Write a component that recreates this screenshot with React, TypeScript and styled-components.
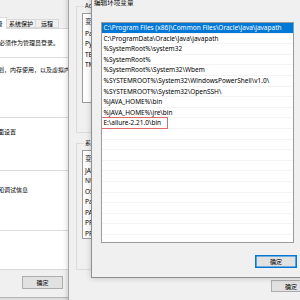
import React from "react";
import styled, { createGlobalStyle } from "styled-components";

const UI = `"Noto Sans", "Noto Sans CJK SC", sans-serif`;
const CJK = `"Noto Sans CJK SC", "Noto Sans", sans-serif`;

const GlobalStyle = createGlobalStyle`
  html, body { margin: 0; padding: 0; background: #f0f0f0; }
  body { font-family: ${UI}; }
  * { box-sizing: border-box; }
`;

const Desktop = styled.div`
  position: relative;
  width: 300px;
  height: 300px;
  overflow: hidden;
  background: #f0f0f0;
  color: #000;
  font-family: ${UI};
  font-size: 6.5px;
`;

const Window = styled.div<{ $x: number; $y: number; $w: number; $h: number; $z: number; $border: string }>`
  position: absolute;
  left: ${(p) => p.$x}px;
  top: ${(p) => p.$y}px;
  width: ${(p) => p.$w}px;
  height: ${(p) => p.$h}px;
  z-index: ${(p) => p.$z};
  display: flex;
  flex-direction: column;
  background: #f0f0f0;
  border: 1px solid ${(p) => p.$border};
  box-shadow: 0 0 6px rgba(0, 0, 0, 0.2);
`;

const TitleBar = styled.div<{ $h: number }>`
  flex: none;
  height: ${(p) => p.$h}px;
  display: flex;
  align-items: center;
  padding-left: 2px;
  font-family: ${CJK};
  font-size: 6.6px;
  color: #000;
  white-space: nowrap;
`;

const Body = styled.div<{ $pad: string }>`
  flex: 1;
  display: flex;
  flex-direction: column;
  padding: ${(p) => p.$pad};
  min-height: 0;
`;

/* ---------- System properties (window 1) ---------- */

const TabStrip = styled.div`
  flex: none;
  height: 12px;
  display: flex;
  align-items: flex-end;
  margin-bottom: -1px;
  position: relative;
  z-index: 1;
`;

const Tab = styled.div<{ $w: number; $active?: boolean }>`
  width: ${(p) => p.$w}px;
  height: ${(p) => (p.$active ? 12 : 9)}px;
  margin-bottom: ${(p) => (p.$active ? 0 : 1)}px;
  margin-left: ${(p) => (p.$active ? 0 : -1)}px;
  display: flex;
  align-items: center;
  justify-content: center;
  font-family: ${CJK};
  font-size: 6px;
  white-space: nowrap;
  background: ${(p) => (p.$active ? "#fff" : "#f0f0f0")};
  border: 1px solid #d9d9d9;
  border-bottom: ${(p) => (p.$active ? "none" : "1px solid #d9d9d9")};
`;

const Panel = styled.div`
  flex: none;
  height: 242px;
  background: #fff;
  border: 1px solid #d9d9d9;
  padding: 10px 6px 0 6px;
  display: flex;
  flex-direction: column;
`;

const Notice = styled.div`
  font-family: ${CJK};
  font-size: 6px;
  line-height: 8px;
  white-space: nowrap;
`;

const Section = styled.div<{ $h: number; $top: number; $last?: boolean }>`
  flex: none;
  height: ${(p) => p.$h}px;
  margin-top: ${(p) => p.$top}px;
  border-top: 1px solid #dcdcdc;
  border-bottom: ${(p) => (p.$last ? "1px solid #dcdcdc" : "none")};
  padding: 0 5px;
  display: flex;
  flex-direction: column;
  align-items: flex-start;
`;

const SectionTitle = styled.div<{ $bg: string }>`
  margin-top: -5px;
  margin-left: 2px;
  padding: 0 1px;
  height: 8px;
  line-height: 8px;
  font-family: ${CJK};
  font-size: 6px;
  white-space: nowrap;
  background: ${(p) => p.$bg};
`;

const SectionText = styled.div<{ $gap: number }>`
  margin-top: ${(p) => p.$gap}px;
  font-family: ${CJK};
  font-size: 6px;
  line-height: 8px;
  white-space: nowrap;
`;

const Footer = styled.div<{ $pad: string }>`
  flex: none;
  display: flex;
  justify-content: flex-end;
  gap: 6px;
  padding: ${(p) => p.$pad};
`;

const Button = styled.div<{ $w: number; $h: number; $primary?: boolean }>`
  width: ${(p) => p.$w}px;
  height: ${(p) => p.$h}px;
  flex: none;
  display: flex;
  align-items: center;
  justify-content: center;
  background: #e1e1e1;
  border: 1px solid ${(p) => (p.$primary ? "#0078d7" : "#adadad")};
  box-shadow: ${(p) => (p.$primary ? "inset 0 0 0 0.6px #0078d7" : "none")};
  font-family: ${CJK};
  font-size: 6px;
  white-space: nowrap;
  color: #000;
`;

/* ---------- Environment variables (window 2) ---------- */

const Group = styled.div<{ $top: number; $bottom: number }>`
  flex: none;
  margin-top: ${(p) => p.$top}px;
  border: 1px solid #dcdcdc;
  padding: 0 5px ${(p) => p.$bottom}px 5px;
  display: flex;
  flex-direction: column;
  align-items: stretch;
`;

const GroupTitleRow = styled.div`
  display: flex;
`;

const ListView = styled.div<{ $h: number }>`
  margin-top: 3px;
  height: ${(p) => p.$h}px;
  background: #fff;
  border: 1px solid #9c9c9c;
  overflow: hidden;
  display: flex;
  flex-direction: column;
`;

const HeaderRow = styled.div`
  flex: none;
  height: 14px;
  display: grid;
  grid-template-columns: 90px 1fr;
  align-items: center;
  font-family: ${CJK};
  font-size: 6.5px;
  color: #1a1a1a;
`;

const HeaderCell = styled.div`
  padding-left: 2px;
  height: 100%;
  display: flex;
  align-items: center;
  border-right: 1px solid #e5e5e5;
`;

const VarRow = styled.div`
  flex: none;
  height: 10.5px;
  display: grid;
  grid-template-columns: 90px 1fr;
  align-items: center;
  white-space: nowrap;
  font-size: 6.5px;
`;

const Cell = styled.div`
  padding-left: 2px;
  overflow: hidden;
`;

const ButtonRow = styled.div`
  margin-top: 5px;
  display: flex;
  justify-content: flex-end;
  gap: 6px;
`;

/* ---------- Edit environment variable (window 3) ---------- */

const EditContent = styled.div`
  flex: none;
  display: flex;
  gap: 6px;
`;

const PathList = styled.div`
  flex: none;
  width: 193px;
  height: 221px;
  background: #fff;
  border: 1px solid #9c9c9c;
  overflow: hidden;
  display: flex;
  flex-direction: column;
`;

const PathRow = styled.div<{ $selected?: boolean }>`
  position: relative;
  flex: none;
  height: 10.6px;
  line-height: 9.6px;
  padding-left: 1.5px;
  white-space: nowrap;
  font-size: 6.5px;
  border-bottom: 1px solid #f4f4f4;
  background: ${(p) => (p.$selected ? "#0078d7" : "#fff")};
  color: ${(p) => (p.$selected ? "#fff" : "#000")};
`;

const Mark = styled.span`
  position: absolute;
  left: -2px;
  top: -1.5px;
  width: 68px;
  height: 12px;
  border: 1px solid #e06b6b;
`;

const SideButtons = styled.div`
  flex: none;
  display: flex;
  flex-direction: column;
  gap: 5px;
`;

const paths = [
  "C:\\Program Files (x86)\\Common Files\\Oracle\\Java\\javapath",
  "C:\\ProgramData\\Oracle\\Java\\javapath",
  "%SystemRoot%\\system32",
  "%SystemRoot%",
  "%SystemRoot%\\System32\\Wbem",
  "%SYSTEMROOT%\\System32\\WindowsPowerShell\\v1.0\\",
  "%SYSTEMROOT%\\System32\\OpenSSH\\",
  "%JAVA_HOME%\\bin",
  "%JAVA_HOME%\\jre\\bin",
  "E:\\allure-2.21.0\\bin",
];

const userVars: [string, string][] = [
  ["Path", "C:\\Users\\Administrator\\AppData\\Local\\Microsoft\\WindowsApps;"],
  ["PyCharm Community Edition", "D:\\PyCharm Community Edition 2022.3\\bin;"],
  ["TEMP", "%USERPROFILE%\\AppData\\Local\\Temp"],
  ["TMP", "%USERPROFILE%\\AppData\\Local\\Temp"],
];

const sysVars: [string, string][] = [
  ["JAVA_HOME", "C:\\Program Files\\Java\\jdk1.8.0_201"],
  ["NUMBER_OF_PROCESSORS", "8"],
  ["OS", "Windows_NT"],
  ["Path", "C:\\Program Files (x86)\\Common Files\\Oracle\\Java\\javapath;"],
  ["PATHEXT", ".COM;.EXE;.BAT;.CMD;.VBS;.VBE;.JS;.JSE;.WSF;.WSH;.MSC"],
  ["PROCESSOR_ARCHITECTURE", "AMD64"],
  ["PROCESSOR_IDENTIFIER", "Intel64 Family 6 Model 158 Stepping 10, GenuineIntel"],
];

function VarList({ h, rows }: { h: number; rows: [string, string][] }) {
  return (
    <ListView $h={h}>
      <HeaderRow>
        <HeaderCell>变量</HeaderCell>
        <HeaderCell>值</HeaderCell>
      </HeaderRow>
      {rows.map(([k, v]) => (
        <VarRow key={k}>
          <Cell>{k}</Cell>
          <Cell>{v}</Cell>
        </VarRow>
      ))}
    </ListView>
  );
}

export default function App() {
  const emptyRows = Array.from({ length: 11 }, (_, i) => i);
  return (
    <>
      <GlobalStyle />
      <Desktop>
        {/* System properties */}
        <Window $x={-73} $y={-20} $w={242} $h={318} $z={1} $border="#b4b4b4">
          <TitleBar $h={16}>系统属性</TitleBar>
          <Body $pad="20px 4px 0 4px">
            <TabStrip>
              <Tab $w={34}>计算机名</Tab>
              <Tab $w={22}>硬件</Tab>
              <Tab $w={21} $active>高级</Tab>
              <Tab $w={30}>系统保护</Tab>
              <Tab $w={24}>远程</Tab>
            </TabStrip>
            <Panel>
              <Notice>要进行大多数更改，你必须作为管理员登录。</Notice>
              <Section $h={60} $top={10}>
                <SectionTitle $bg="#fff">性能</SectionTitle>
                <SectionText $gap={5}>视觉效果，处理器计划，内存使用，以及虚拟内存</SectionText>
              </Section>
              <Section $h={53} $top={0}>
                <SectionTitle $bg="#fff">用户配置文件</SectionTitle>
                <SectionText $gap={7}>与登录帐户相关的桌面设置</SectionText>
              </Section>
              <Section $h={61} $top={0} $last>
                <SectionTitle $bg="#fff">启动和故障恢复</SectionTitle>
                <SectionText $gap={12}>系统启动、系统故障和调试信息</SectionText>
              </Section>
            </Panel>
            <Footer $pad="6px 7px 8px 0">
              <Button $w={41} $h={13}>确定</Button>
              <Button $w={41} $h={13}>取消</Button>
              <Button $w={41} $h={13}>应用(A)</Button>
            </Footer>
          </Body>
        </Window>

        {/* Environment variables */}
        <Window $x={68} $y={-20} $w={297} $h={330} $z={2} $border="#a6a6a6">
          <TitleBar $h={16}>环境变量</TitleBar>
          <Body $pad="9px 7px 0 7px">
            <Group $top={0} $bottom={11}>
              <GroupTitleRow>
                <SectionTitle $bg="#f0f0f0">Administrator 的用户变量(U)</SectionTitle>
              </GroupTitleRow>
              <VarList h={90} rows={userVars} />
              <ButtonRow>
                <Button $w={42} $h={13}>新建(N)...</Button>
                <Button $w={42} $h={13}>编辑(E)...</Button>
                <Button $w={42} $h={13}>删除(D)</Button>
              </ButtonRow>
            </Group>
            <Group $top={10} $bottom={12}>
              <GroupTitleRow>
                <SectionTitle $bg="#f0f0f0">系统变量(S)</SectionTitle>
              </GroupTitleRow>
              <VarList h={89} rows={sysVars} />
              <ButtonRow>
                <Button $w={42} $h={13}>新建(W)...</Button>
                <Button $w={42} $h={13}>编辑(I)...</Button>
                <Button $w={42} $h={13}>删除(L)</Button>
              </ButtonRow>
            </Group>
            <Footer $pad="10px 0 0 0">
              <Button $w={40} $h={12}>确定</Button>
              <Button $w={40} $h={12}>取消</Button>
            </Footer>
          </Body>
        </Window>

        {/* Edit environment variable */}
        <Window $x={91} $y={-6} $w={264} $h={284} $z={3} $border="#8f8f8f">
          <TitleBar $h={14}>编辑环境变量</TitleBar>
          <Body $pad="13px 9px 0 9px">
            <EditContent>
              <PathList>
                {paths.map((p, i) => (
                  <PathRow key={p} $selected={i === 0}>
                    {p}
                    {i === paths.length - 1 && <Mark />}
                  </PathRow>
                ))}
                {emptyRows.map((i) => (
                  <PathRow key={`e${i}`} />
                ))}
              </PathList>
              <SideButtons>
                <Button $w={45} $h={13}>新建(N)</Button>
                <Button $w={45} $h={13}>编辑(E)</Button>
                <Button $w={45} $h={13}>浏览(B)...</Button>
                <Button $w={45} $h={13}>删除(D)</Button>
                <Button $w={45} $h={13}>上移(U)</Button>
                <Button $w={45} $h={13}>下移(O)</Button>
                <Button $w={45} $h={13}>编辑文本(T)...</Button>
              </SideButtons>
            </EditContent>
            <Footer $pad="12px 0 0 0">
              <Button $w={42} $h={13} $primary>确定</Button>
              <Button $w={42} $h={13}>取消</Button>
            </Footer>
          </Body>
        </Window>
      </Desktop>
    </>
  );
}
